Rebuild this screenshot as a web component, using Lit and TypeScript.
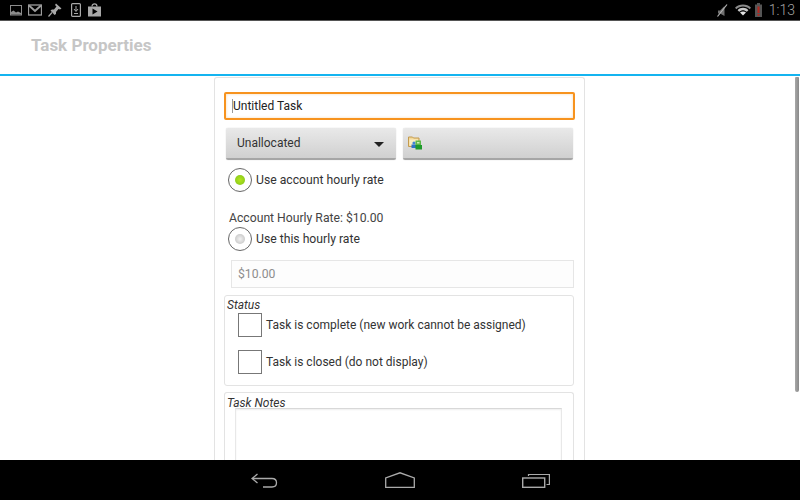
import { LitElement, html, css, svg } from "lit";
import { customElement } from "lit/decorators.js";

@customElement("app-root")
export class AppRoot extends LitElement {
  static styles = css`
    :host { display: flex; flex-direction: column; width: 800px; height: 500px; overflow: hidden; background: #fff;
      font-family: Roboto, "Liberation Sans", sans-serif; font-size: 12.2px; color: #333; }
    .status { height: 20px; background: #000; border-bottom: 1px solid #555; box-sizing: content-box; display: flex; align-items: center; justify-content: space-between; flex: none; }
    .status-left { display: flex; align-items: center; padding-left: 10px; }
    .status-left svg { display: block; }
    .status-right { display: flex; align-items: center; padding-right: 5px; }
    .status-right svg { display: block; }
    .clock { color: #a5a5a5; font-size: 14px; font-weight: 300; margin-left: 7px; }
    .actionbar { height: 55px; flex: none; box-sizing: border-box; border-bottom: 2px solid #14b4f0; display: flex; align-items: center; padding: 0 0 5px 31px; }
    .title { font-size: 17px; font-weight: 700; color: #c6c6c6; }
    .main { flex: 1; min-height: 0; position: relative; overflow: hidden; display: flex; justify-content: center; padding-top: 1px; }
    .scrollbar { position: absolute; right: 1px; top: 1px; width: 4px; height: 315px; background: linear-gradient(90deg, #a8a8a8, #8a8a8a); border-radius: 1px 1px 2px 2px; }
    .card { width: 371px; box-sizing: border-box; margin-left: -1px; border: 1px solid #e3e3e3; border-bottom: none; border-radius: 3px 3px 0 0; padding: 14px 9px 0 9px; height: 420px; flex: none; }
    .name { height: 28px; box-sizing: border-box; width: 351px; border: 2px solid #f7931e; border-radius: 2px; display: flex; align-items: center; padding-left: 7px; color: #222; font-size: 12px; box-shadow: inset 0 0 3px #f5d9b5; }
    .caret { border-left: 1px solid #999; margin-left: -1px; }
    .buttons { display: flex; gap: 7px; margin: 8px 0 0 2px; }
    .btn { width: 170px; height: 32px; box-sizing: border-box; border-radius: 2px; background: linear-gradient(#e9e9e9, #d0d0d0); border-bottom: 2px solid #a6a6a6; box-shadow: 0 0 1px #bbb; display: flex; align-items: center; padding: 0 11px; position: relative; color: #333; font-size: 12px; }
    .btn.icon { padding: 0 5px; }
    .arrow { position: absolute; right: 12px; top: 14px; width: 0; height: 0; border-left: 5.5px solid transparent; border-right: 5.5px solid transparent; border-top: 5px solid #222; }
    .radio-row { display: flex; align-items: center; gap: 4px; margin-left: 4px; height: 26px; }
    .radio { width: 24px; height: 24px; box-sizing: border-box; border: 1px solid #666; border-radius: 50%; display: flex; align-items: center; justify-content: center; flex: none; }
    .dot { width: 10px; height: 10px; border-radius: 50%; background: radial-gradient(#b5e61d, #7fc31c); }
    .dot.off { background: radial-gradient(#f2f2f2, #bdbdbd); }
    .first { margin-top: 7px; }
    .acct { margin: 17px 0 0 5px; height: 16px; line-height: 16px; color: #444; }
    .second { margin-top: 0; }
    .rate { width: 343px; height: 28px; box-sizing: border-box; margin: 8px 0 0 7px; border: 1px solid #e6e6e6; background: #fdfdfd; display: flex; align-items: center; padding-left: 6px; color: #8e8e8e; }
    .group { width: 350px; box-sizing: border-box; border: 1px solid #e3e3e3; border-radius: 3px; }
    .status-group { height: 91px; margin-top: 7px; padding: 2px 0 0 2px; }
    .legend { font-style: italic; line-height: 15px; color: #333; font-size: 12px; }
    .check-row { display: flex; align-items: center; gap: 4px; height: 24px; margin: 0 0 0 11px; color: #333; font-size: 12px; }
    .check-row + .check-row { margin-top: 13px; }
    .box { width: 24px; height: 24px; box-sizing: border-box; border: 1px solid #777; flex: none; }
    .notes-group { margin-top: 6px; height: 100px; padding: 3px 0 0 2px; border-bottom: none; }
    .notes { margin: -3px 0 0 8px; width: 327px; height: 70px; box-sizing: border-box; border: 1px solid #e8e8e8; border-top-color: #d8d8d8; box-shadow: inset 0 1px 2px #eee; }
    .nav { height: 40px; background: #000; flex: none; display: flex; justify-content: center; align-items: center; gap: 106px; box-sizing: border-box; padding-left: 1px; }
    .nav svg { display: block; }
    .nav .recents { margin-left: 1px; }
  `;

  private leftIcons() {
    return html`
      <svg width="12" height="12" viewBox="0 0 12 12" style="margin-right:6px"><rect x="0.5" y="1.5" width="11" height="9.5" fill="none" stroke="#8c8c8c"/><path d="M1 10 L1 8 L3.5 6.5 L6 8.5 L8 7.5 L11 9 V10.5 H1Z" fill="#8c8c8c"/></svg>
      <svg width="14" height="12" viewBox="0 0 14 12" style="margin-right:6px"><rect x="0.5" y="1" width="13" height="10" fill="none" stroke="#9c9c9c" stroke-width="1.3"/><path d="M1 1.5 L7 7 L13 1.5" fill="none" stroke="#9c9c9c" stroke-width="2"/></svg>
      <svg width="14" height="14" viewBox="0 0 14 14" style="margin-right:9px"><path d="M8 0.5 L13.5 5.5 L12 6.5 L10.5 6 L8 9 L8 11 L6.5 12 L2.5 7.5 L4 6.5 L6 6.5 L8.5 3.5 L7 2Z" fill="#a8a8a8"/><path d="M4 9.5 L0.5 13.5" stroke="#a8a8a8" stroke-width="1.2"/></svg>
      <svg width="10" height="14" viewBox="0 0 10 14" style="margin-right:7px"><rect x="0.6" y="0.6" width="8.8" height="12.8" rx="1" fill="none" stroke="#a8a8a8" stroke-width="1.2"/><path d="M5 3 V8 M3 6 L5 8.5 L7 6" fill="none" stroke="#a8a8a8"/><path d="M3 10.5 H7" stroke="#a8a8a8"/></svg>
      <svg width="13" height="14" viewBox="0 0 13 14"><path d="M0 3.5 H13 V13.5 H0Z" fill="#a8a8a8"/><path d="M4 3.5 C4 0 9 0 9 3.5" fill="none" stroke="#a8a8a8" stroke-width="1.2"/><path d="M4.5 5.5 L9.5 8.5 L4.5 11.5Z" fill="#000"/></svg>
    `;
  }

  private rightIcons() {
    return html`
      <svg width="13" height="15" viewBox="0 0 13 15" style="margin-right:6px"><path d="M2 7.5 H4 L8.5 3 V13 L4 10.5 H2Z" fill="#6f6f6f"/><path d="M1.5 13.5 L11 1.5" stroke="#b5b5b5" stroke-width="1.2"/></svg>
      <svg width="16" height="12" viewBox="0 0 16 12" style="margin-right:4px"><path d="M0 3.8 C4 -0.6 12 -0.6 16 3.8 L14.6 5.2 C11 1.5 5 1.5 1.4 5.2Z" fill="#8a8a8a"/><path d="M2.6 6.2 C5.5 3 10.5 3 13.4 6.2 L11.8 7.8 C9.5 5.6 6.5 5.6 4.2 7.8Z" fill="#c8c8c8"/><path d="M5 8.6 C6.8 7 9.2 7 11 8.6 L8 11.6Z" fill="#e2e2e2"/></svg>
      <svg width="7" height="14" viewBox="0 0 7 14"><path d="M2 0 H5 V1.5 H7 V14 H0 V1.5 H2Z" fill="#555"/><rect x="2.5" y="3.5" width="2" height="6.5" fill="#b3261e"/><rect x="2.5" y="11" width="2" height="1.8" fill="#b3261e"/></svg>
      <span class="clock">1:13</span>
    `;
  }

  private folderIcon() {
    return svg`<svg width="14" height="14" viewBox="0 0 14 14">
      <path d="M0.5 1 H4.5 L5.5 2 H11 V10.5 H0.5Z" fill="#f3d998" stroke="#c39a4e"/>
      <rect x="1.5" y="3.5" width="8.5" height="6" fill="#fbeec4"/>
      <circle cx="6" cy="7" r="1.6" fill="#3f86d6"/>
      <rect x="3.5" y="8.5" width="5" height="3.5" fill="#2f73c8"/>
      <rect x="7.5" y="4.5" width="5.5" height="4.5" fill="#5cb84a"/>
      <rect x="9" y="6" width="2.5" height="1.5" fill="#c9efb0"/>
      <rect x="7.5" y="9" width="6.5" height="4.5" fill="#1f9a2b"/>
    </svg>`;
  }

  render() {
    return html`
      <div class="status">
        <div class="status-left">${this.leftIcons()}</div>
        <div class="status-right">${this.rightIcons()}</div>
      </div>
      <div class="actionbar"><span class="title">Task Properties</span></div>
      <div class="main">
        <div class="card">
          <div class="name"><span class="caret">Untitled Task</span></div>
          <div class="buttons">
            <div class="btn">Unallocated<span class="arrow"></span></div>
            <div class="btn icon">${this.folderIcon()}</div>
          </div>
          <div class="radio-row first"><span class="radio"><span class="dot"></span></span><span>Use account hourly rate</span></div>
          <div class="acct">Account Hourly Rate: $10.00</div>
          <div class="radio-row second"><span class="radio"><span class="dot off"></span></span><span>Use this hourly rate</span></div>
          <div class="rate">$10.00</div>
          <div class="group status-group">
            <div class="legend">Status</div>
            <div class="check-row"><span class="box"></span><span>Task is complete (new work cannot be assigned)</span></div>
            <div class="check-row"><span class="box"></span><span>Task is closed (do not display)</span></div>
          </div>
          <div class="group notes-group">
            <div class="legend">Task Notes</div>
            <div class="notes"></div>
          </div>
        </div>
        <div class="scrollbar"></div>
      </div>
      <div class="nav">
        <svg width="28" height="16" viewBox="0 0 28 16"><path d="M6.5 2 L1 6.5 L6.5 11 M1 6.5 H21 C27 6.5 27 15 21 15 H12" fill="none" stroke="#aaa" stroke-width="1.3"/></svg>
        <svg width="30" height="16" viewBox="0 0 30 16"><path d="M0.7 15.3 V6 L15 0.8 L29.3 6 V15.3Z" fill="none" stroke="#aaa" stroke-width="1.3"/></svg>
        <svg class="recents" width="28" height="16" viewBox="0 0 28 16"><rect x="0.7" y="6" width="22" height="9.3" fill="none" stroke="#aaa" stroke-width="1.4"/><path d="M6.5 4 V2.5 H27.4 V12.5 H24.5" fill="none" stroke="#aaa" stroke-width="1.2"/></svg>
      </div>
    `;
  }
}
